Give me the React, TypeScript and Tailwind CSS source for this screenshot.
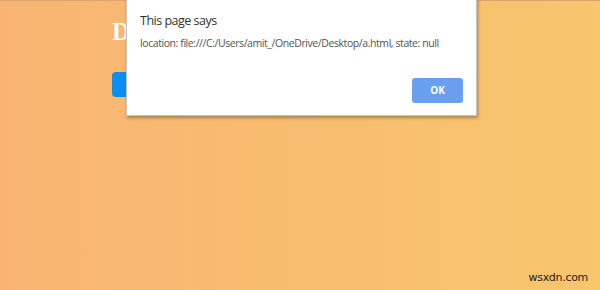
import React from 'react';

export default function App() {
    return (
        <div className="relative w-[600px] h-[290px] overflow-hidden bg-gradient-to-r from-[#f9b473] to-[#f7c66d]">
            {/* top edge */}
            <div className="h-px bg-[#d9a472]" />

            {/* page behind the dialog */}
            <div className="pl-[112px] pt-[20px]">
                <h1 className="text-[25px] leading-[21px] font-bold text-white" style={{ fontFamily: '"Liberation Serif", serif' }}>
                    D
                </h1>
                <div className="mt-[30px] w-[360px] h-[25px] rounded-sm bg-[#0b8ff0]" />
            </div>

            {/* alert dialog */}
            <div className="absolute left-[126px] top-[-4px] w-[351px] h-[120px] bg-white border border-[#c9c2b8] shadow-[1px_2px_3px_rgba(80,60,30,0.45)] px-[13px] pt-[15px]" style={{ fontFamily: '"Open Sans", sans-serif' }}>
                <div className="text-[12.5px] leading-[18px] text-[#333] tracking-[-0.5px]">This page says</div>
                <div className="mt-[6px] text-[10.5px] leading-[14px] text-[#555] tracking-[-0.42px] whitespace-nowrap">
                    location: file:///C:/Users/amit_/OneDrive/Desktop/a.html, state: null
                </div>
                <div className="flex justify-end mt-[28px]">
                    <button className="w-[51px] h-[25px] rounded-[3px] bg-[#6a9ff0] text-white text-[10px] font-bold">
                        OK
                    </button>
                </div>
            </div>

            {/* watermark */}
            <div className="absolute right-[12px] bottom-[4px] text-[11px] text-[#222] tracking-[-0.3px]" style={{ fontFamily: '"DejaVu Sans", sans-serif' }}>
                wsxdn.com
            </div>
        </div>
    );
}
